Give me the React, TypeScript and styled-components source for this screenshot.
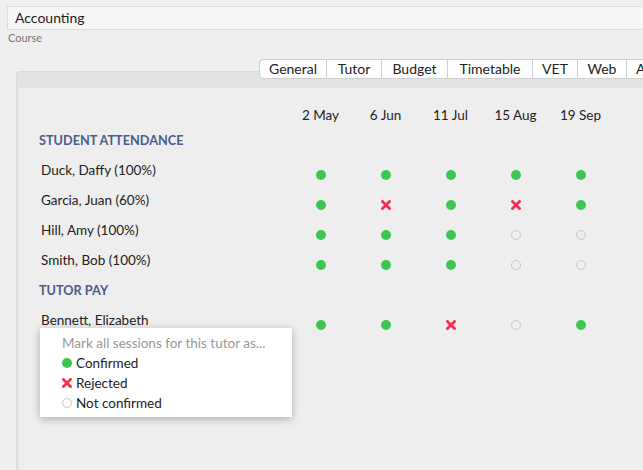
import { Fragment } from "react";
import styled, { createGlobalStyle } from "styled-components";

const GlobalStyle = createGlobalStyle`
  html, body {
    margin: 0;
    padding: 0;
    background: #efefef;
    font-family: "Source Sans Pro", Lato, "Liberation Sans", sans-serif;
    color: #222;
    overflow: hidden;
  }
`;

const Page = styled.div`
  width: 643px;
  height: 470px;
  overflow: hidden;
  padding: 6px 0 0 7px;
  box-sizing: border-box;
`;

const CourseInput = styled.div`
  height: 24px;
  box-sizing: border-box;
  border: 1px solid #dcdcdc;
  background: #f7f7f7;
  padding-left: 7px;
  font-size: 14px;
  line-height: 22px;
  margin-right: -10px;
`;

const FieldLabel = styled.div`
  font-size: 11px;
  color: #777;
  margin-top: 1px;
  padding-left: 1px;
`;

const Section = styled.div`
  margin: 15px 0 0 9px;
  display: flex;
  flex-direction: column;
`;

const TabBar = styled.div`
  display: flex;
  padding-left: 243px;
  margin-bottom: -8px;
  position: relative;
  z-index: 1;
  white-space: nowrap;
`;

const Tab = styled.div<{ $first?: boolean; $w?: number }>`
  flex: none;
  width: ${(p) => (p.$w ? `${p.$w}px` : "auto")};
  height: 20px;
  box-sizing: border-box;
  background: #fff;
  border: 1px solid #cfcfcf;
  border-left: ${(p) => (p.$first ? "1px solid #cfcfcf" : "none")};
  border-radius: ${(p) => (p.$first ? "4px 0 0 4px" : "0")};
  padding: ${(p) => (p.$w ? "0" : "0 9px")};
  text-align: center;
  font-size: 14px;
  line-height: 18px;
  color: #222;
`;

const Panel = styled.div`
  background: #e4e4e4;
  border: 1px solid #dadada;
  border-right: none;
  border-radius: 4px 0 0 0;
  padding: 16px 0 0 2px;
  height: 400px;
`;

const PanelBody = styled.div`
  background: #eeeeee;
  height: 100%;
  padding: 17px 0 0 20px;
  box-sizing: border-box;
`;

const Grid = styled.div`
  display: grid;
  grid-template-columns: 249px repeat(5, 65px);
  grid-template-rows: 20px;
  grid-auto-rows: 30px;
  font-size: 13.5px;
`;

const DateHead = styled.div`
  display: flex;
  align-items: center;
  justify-content: center;
`;

const GroupTitle = styled.div`
  grid-column: 1 / -1;
  display: flex;
  align-items: center;
  font-weight: 700;
  font-size: 12.7px;
  color: #4b5b8c;
`;

const Name = styled.div`
  display: flex;
  align-items: center;
  padding-left: 2px;
  position: relative;
`;

const Cell = styled.div`
  display: flex;
  align-items: center;
  justify-content: center;
  padding-top: 10px;
  box-sizing: border-box;
`;

const Dot = styled.span`
  display: inline-block;
  width: 10px;
  height: 10px;
  border-radius: 50%;
  background: #3ec653;
`;

const Ring = styled.span`
  display: inline-block;
  width: 10px;
  height: 10px;
  box-sizing: border-box;
  border-radius: 50%;
  border: 1px solid #c8c8c8;
`;

const Cross = () => (
  <svg width="10" height="10" viewBox="0 0 10 10">
    <path d="M1.5 1.5 L8.5 8.5 M8.5 1.5 L1.5 8.5" stroke="#f5304f" strokeWidth="2.8" strokeLinecap="square" />
  </svg>
);

const Menu = styled.div`
  position: absolute;
  left: 1px;
  top: 23px;
  width: 252px;
  box-sizing: border-box;
  background: #fff;
  box-shadow: 0 2px 8px rgba(0, 0, 0, 0.28);
  padding: 5px 0 4px 22px;
  z-index: 2;
`;

const MenuItem = styled.div<{ $muted?: boolean }>`
  display: flex;
  align-items: center;
  gap: 4px;
  height: 20px;
  font-size: 13.5px;
  color: ${(p) => (p.$muted ? "#999" : "#222")};
`;

type Mark = "y" | "n" | "o";

const Status = ({ m }: { m: Mark }) =>
  m === "y" ? <Dot /> : m === "n" ? <Cross /> : <Ring />;

const dates = ["2 May", "6 Jun", "11 Jul", "15 Aug", "19 Sep"];

const students: { name: string; marks: Mark[] }[] = [
  { name: "Duck, Daffy (100%)", marks: ["y", "y", "y", "y", "y"] },
  { name: "Garcia, Juan (60%)", marks: ["y", "n", "y", "n", "y"] },
  { name: "Hill, Amy (100%)", marks: ["y", "y", "y", "o", "o"] },
  { name: "Smith, Bob (100%)", marks: ["y", "y", "y", "o", "o"] },
];

const tabs: { label: string; w?: number }[] = [
  { label: "General", w: 68 },
  { label: "Tutor", w: 55 },
  { label: "Budget", w: 66 },
  { label: "Timetable", w: 85 },
  { label: "VET", w: 45 },
  { label: "Web", w: 49 },
  { label: "Attendance" },
];

export default function App() {
  return (
    <Page>
      <GlobalStyle />
      <CourseInput>Accounting</CourseInput>
      <FieldLabel>Course</FieldLabel>
      <Section>
        <TabBar>
          {tabs.map((t, i) => (
            <Tab key={t.label} $first={i === 0} $w={t.w}>
              {t.label}
            </Tab>
          ))}
        </TabBar>
        <Panel>
          <PanelBody>
            <Grid>
              <div />
              {dates.map((d) => (
                <DateHead key={d}>{d}</DateHead>
              ))}
              <GroupTitle>STUDENT ATTENDANCE</GroupTitle>
              {students.map((s) => (
                <Fragment key={s.name}>
                  <Name>{s.name}</Name>
                  {s.marks.map((m, i) => (
                    <Cell key={i}>
                      <Status m={m} />
                    </Cell>
                  ))}
                </Fragment>
              ))}
              <GroupTitle>TUTOR PAY</GroupTitle>
              <Name>
                Bennett, Elizabeth
                <Menu>
                  <MenuItem $muted>Mark all sessions for this tutor as...</MenuItem>
                  <MenuItem>
                    <Dot />
                    Confirmed
                  </MenuItem>
                  <MenuItem>
                    <Cross />
                    Rejected
                  </MenuItem>
                  <MenuItem>
                    <Ring />
                    Not confirmed
                  </MenuItem>
                </Menu>
              </Name>
              {(["y", "y", "n", "o", "y"] as Mark[]).map((m, i) => (
                <Cell key={"b" + i}>
                  <Status m={m} />
                </Cell>
              ))}
            </Grid>
          </PanelBody>
        </Panel>
      </Section>
    </Page>
  );
}
